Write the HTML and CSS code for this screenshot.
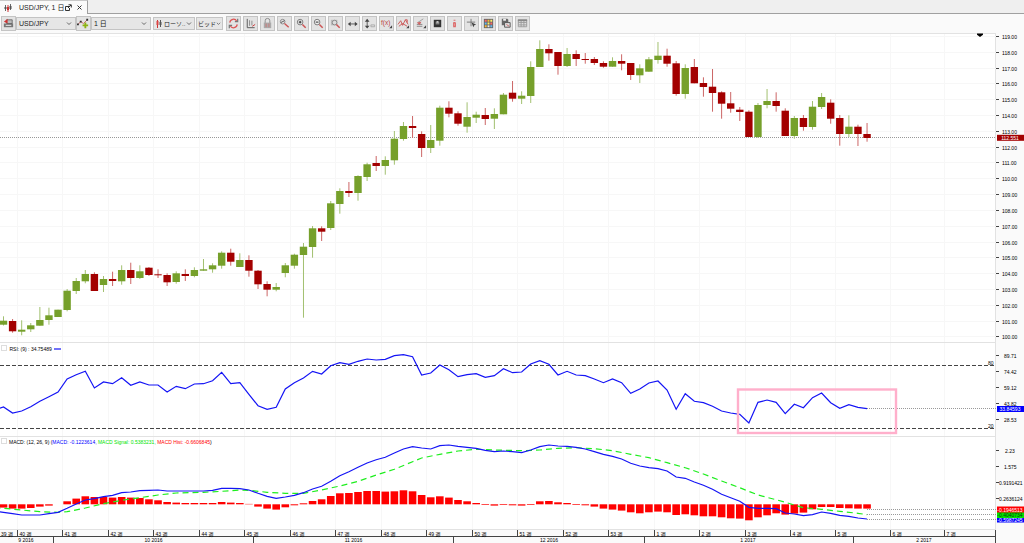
FILE: index.html
```html
<!DOCTYPE html>
<html lang="ja">
<head>
<meta charset="utf-8">
<title>USD/JPY, 1 日</title>
<link rel="stylesheet" href="styles.css">
</head>
<body>
<header class="tabs">
  <div class="tab">
    <svg class="tab-icon" width="8" height="8" viewBox="0 0 8 8"><path d="M1.5 1v6M6.5 0v6" stroke="#666" stroke-width="1"/><path d="M4 1v7" stroke="#c33"/><path d="M0.5 3h2v2h-2zM5.5 2h2v3h-2z" fill="#555"/><path d="M3 3h2v3H3z" fill="#c33"/></svg>
    <span class="tab-title">USD/JPY, 1 日</span>
    <button class="tab-btn" aria-label="切り離す"><svg width="7" height="7" viewBox="0 0 7 7" fill="none" stroke="#333"><path d="M4 2.500H.5v4h4V4"/><path d="M3 4L6 1M3.500.8H6.300V3.500"/></svg></button>
    <button class="tab-btn" aria-label="閉じる"><svg width="7" height="7" viewBox="0 0 7 7" stroke="#333"><path d="M1.500 1.500l4 4M5.500 1.500l-4 4"/></svg></button>
  </div>
</header>
<nav class="toolbar">
  <div class="group">
    <button class="tool" aria-label="銘柄"><svg viewBox="0 0 14 14"><path d="M2 7h10v4H2z" fill="#777"/><path d="M5 3h6v4H5z" fill="#bbb" stroke="#555" stroke-width=".8"/><path d="M6 2L2 5l4 2z" fill="#c33"/><path d="M4 9h6" stroke="#eee"/></svg></button>
    <label class="pick pick-symbol"><select aria-label="通貨ペア"><option>USD/JPY</option></select><svg class="chev" viewBox="0 0 6 4"><path d="M1 .5l2 2 2-2"/></svg></label>
    <button class="tool" aria-label="比較を追加"><svg viewBox="0 0 14 14"><path d="M1 8l3-3 3 2 4-4" fill="none" stroke="#c66"/><path d="M0 7h2v2H0zM3 4h2v2H3zM10 2h2v2h-2z" fill="#333"/><path d="M9 6v6M6 9h6" stroke="#8db312" stroke-width="2"/></svg></button>
    <label class="pick pick-period"><select aria-label="期間"><option>1 日</option></select><svg class="chev" viewBox="0 0 6 4"><path d="M1 .5l2 2 2-2"/></svg></label>
  </div>
  <div class="group pair">
    <label class="pick pick-style"><svg class="lead" viewBox="0 0 6 8"><path d="M1.500 0v8" stroke="#c33"/><path d="M4.500 0v7" stroke="#555"/><path d="M.5 1h2v4h-2z" fill="#d44"/><path d="M3.500 2h2v3h-2z" fill="#555"/></svg><select aria-label="チャート種類"><option>ローソ..</option></select><svg class="chev" viewBox="0 0 6 4"><path d="M1 .5l2 2 2-2"/></svg></label>
    <label class="pick pick-side"><select aria-label="価格"><option>ビッド</option></select><svg class="chev" viewBox="0 0 6 4"><path d="M1 .5l2 2 2-2"/></svg></label>
  </div>
  <div class="tools">
    <button class="tool" aria-label="更新"><svg viewBox="0 0 14 14" fill="none" stroke="#d55" stroke-width="1.300"><path d="M3 6a4 4 0 0 1 7.500-1.500M11 8a4 4 0 0 1-7.500 1.500"/><path d="M11.500 2v3h-3M2.500 12V9h3" stroke="#777"/></svg></button>
    <button class="tool" aria-label="自動シフト"><svg viewBox="0 0 14 14" fill="none" stroke="#555"><path d="M3.500 2v9.500h8"/><path d="M6 3.500v6M8.500 4v5" stroke="#888"/><path d="M12 8l-3 2" stroke="#c33"/></svg></button>
    <button class="tool" aria-label="ロック"><svg viewBox="0 0 14 14" fill="none"><path d="M4.500 7V4a2.500 2.500 0 0 1 5 0v3" stroke="#888"/><path d="M3 6h8v6H3z" fill="#aaa"/><path d="M5.500 7v4M8.500 7v4" stroke="#c77"/></svg></button>
    <button class="tool" aria-label="縮尺"><svg viewBox="0 0 14 14" fill="none"><circle cx="5" cy="5" r="2.500" stroke="#888"/><path d="M3 6l4-2" stroke="#555"/><path d="M7 7l4.500 4" stroke="#c55" stroke-width="1.500"/></svg></button>
    <button class="tool" aria-label="拡大"><svg viewBox="0 0 14 14" fill="none"><circle cx="5.500" cy="5.500" r="3" fill="#eee" stroke="#777"/><path d="M4 5.500h3M5.500 4v3" stroke="#222"/><path d="M8 8l3.500 3.500" stroke="#c55" stroke-width="1.600"/></svg></button>
    <button class="tool" aria-label="縮小"><svg viewBox="0 0 14 14" fill="none"><circle cx="5.500" cy="5.500" r="3" fill="#eee" stroke="#777"/><path d="M4 5.500h3" stroke="#222"/><path d="M8 8l3.500 3.500" stroke="#c55" stroke-width="1.600"/></svg></button>
    <button class="tool" aria-label="範囲拡大"><svg viewBox="0 0 14 14" fill="none"><path d="M2 3h7v6H2z" fill="#bbb"/><circle cx="6" cy="6" r="2.500" fill="#ddd" stroke="#888"/><path d="M8 8l3.500 3.500" stroke="#c55" stroke-width="1.600"/></svg></button>
    <button class="tool" aria-label="横軸"><svg viewBox="0 0 14 14"><path d="M4 7.500h7" stroke="#555"/><path d="M5 5v5L2 7.500zM9.500 5v5l3-2.500z" fill="#444"/></svg></button>
    <button class="tool" aria-label="縦軸"><svg viewBox="0 0 14 14"><path d="M4.500 3v8" stroke="#555"/><path d="M2 5h5L4.500 2zM2 9.500h5l-2.500 3z" fill="#444"/><path d="M8.500 8.500h4v2h-4z" fill="none" stroke="#aaa"/></svg></button>
    <button class="tool" aria-label="インジケーター"><svg viewBox="0 0 14 14"><text x="1" y="9" class="fx">f(x)</text><path d="M10 12h3v-3z" fill="#444"/></svg></button>
    <button class="tool" aria-label="パターン"><svg viewBox="0 0 14 14" fill="none" stroke="#c55"><path d="M1 8l3-4 2 5 3-6 3 5M2 10l4-3 5 3M9 3h2v3"/><path d="M10 12h3v-3z" fill="#444" stroke="none"/></svg></button>
    <button class="tool" aria-label="描画"><svg viewBox="0 0 14 14" fill="none"><path d="M3 8h6M3 10h6" stroke="#888"/><path d="M4 6l6-4" stroke="#999"/><path d="M3 6l3 3 2-4z" fill="#c66"/><path d="M10 12h3v-3z" fill="#444"/></svg></button>
    <button class="tool" aria-label="表示"><svg viewBox="0 0 14 14"><path d="M3 3h8v8H3z" fill="#333"/><path d="M5 5h4v3H5z" fill="#888"/><path d="M6 4.500h2V6H6z" fill="#ddd"/></svg></button>
    <button class="tool" aria-label="情報"><svg viewBox="0 0 14 14" fill="none" stroke="#d66"><path d="M6 3.500h2M6 6.500h1.500v4M5.500 10.500h3"/><path d="M6 6h2v4H6z"/></svg></button>
    <button class="tool" aria-label="カーソル"><svg viewBox="0 0 14 14" fill="none"><path d="M6.500 2v8M2 5.500h9" stroke="#777"/><path d="M7 6l5 2-2 1-1 2z" fill="#444"/></svg></button>
    <button class="tool" aria-label="配色"><svg viewBox="0 0 14 14"><path d="M2 2h10v10H2z" fill="#666"/><path d="M3 3h2v2H3zM9 6h2v2H9z" fill="#f66"/><path d="M6 3h2v2H6zM3 9h2v2H3z" fill="#fb3"/><path d="M9 3h2v2H9zM6 6h2v2H6z" fill="#fe6"/><path d="M3 6h2v2H3zM9 9h2v2H9z" fill="#6be"/><path d="M6 9h2v2H6z" fill="#eee"/></svg></button>
    <button class="tool" aria-label="保存"><svg viewBox="0 0 14 14"><path d="M3 2h6l1 1v6H3z" fill="#666"/><path d="M4.500 2h3v2h-3z" fill="#eee"/><path d="M6 6h6v5H6z" fill="#ddd" stroke="#555"/><path d="M8 8l3 2" stroke="#c66"/></svg></button>
    <button class="tool" aria-label="表"><svg viewBox="0 0 14 14" fill="none" stroke="#999"><path d="M2.500 3.500h9v7h-9zM2.500 6h9M2.500 8.500h9M5.500 4v6.500M8.500 4v6.500"/><path d="M2 3.500h10" stroke="#888" stroke-width="2"/></svg></button>
  </div>
</nav>
<main class="charts">
  <svg class="panel" id="price" viewBox="0 33 1024 309" role="img" aria-label="USD/JPY ローソク足"></svg>
  <svg class="panel" id="rsi" viewBox="0 342 1024 94" role="img" aria-label="RSI"></svg>
  <svg class="panel" id="macd" viewBox="0 436 1024 93" role="img" aria-label="MACD"></svg>
  <svg class="panel" id="time" viewBox="0 529 1024 14" role="img" aria-label="時間軸"></svg>
</main>
<script src="chart.js"></script>
</body>
</html>
```

FILE: styles.css
```css
* {
  box-sizing: border-box;
}

body {
  margin: 0;
  background: #fafafa;
  color: #222;
  font-family: "Liberation Sans", "Noto Sans CJK JP", sans-serif;
  font-size: 7px;
  line-height: 8px;
}

button,
select {
  margin: 0;
  padding: 0;
  border: 0;
  background: none;
  color: inherit;
  font: inherit;
}

.tabs {
  display: flex;
  height: 14px;
  background: #efefef;
}

.tabs::after {
  content: "";
  flex: 1;
  border-bottom: 1px solid #a0a0a0;
}

.tab {
  display: flex;
  align-items: center;
  width: 88px;
  padding-left: 4px;
  background: #fafafa;
  border-top: 1px solid #c8c8c8;
  border-right: 1px solid #a0a0a0;
}

.tab-title {
  flex: 1;
  margin-left: 7px;
  white-space: nowrap;
}

.tab-btn {
  display: flex;
  margin-right: 4px;
}

.toolbar {
  display: flex;
  align-items: center;
  height: 19px;
  padding-left: 1px;
}

.group {
  display: flex;
  align-items: center;
  margin-right: 2px;
}

.pair {
  gap: 1px;
}

.tools {
  display: flex;
  gap: 2px;
  margin-left: 1px;
}

.tool {
  flex: none;
  width: 15px;
  height: 15px;
  background: #e3e3e3;
  border: 1px solid #c4c4c4;
}

.tool svg {
  display: block;
  width: 13px;
  height: 13px;
}

.fx {
  fill: #b44;
  font-size: 7px;
}

.pick {
  display: flex;
  flex: none;
  align-items: center;
  height: 13px;
  padding: 0 3px 0 2px;
  background: #e6e6e6;
  border: 1px solid #c4c4c4;
}

.pick select {
  flex: 1;
  min-width: 0;
  appearance: none;
  outline: none;
}

.pick-symbol {
  width: 60px;
}

.pick-period {
  width: 60px;
}

.pick-style {
  width: 42px;
  padding: 0 2px 0 1px;
  font-size: 6px;
}

.pick-side {
  width: 27px;
  padding: 0 1px;
  font-size: 6px;
}

.chev {
  flex: none;
  width: 6px;
  height: 4px;
  fill: none;
  stroke: #666;
}

.pick-side .chev {
  width: 5px;
}

.lead {
  flex: none;
  width: 6px;
  height: 8px;
  margin: 0 2px 0 1px;
}

.charts {
  display: flex;
  flex-direction: column;
}

.panel {
  display: block;
  width: 100%;
  font-size: 5px;
}

.plot {
  fill: #fff;
}

.axis-bg {
  fill: #fafafa;
}

.grid {
  stroke: #f7f7f7;
}

.edge {
  stroke: #e2e2e2;
}

.tick,
.time-line {
  stroke: #444;
}

.up {
  fill: #76a02b;
}

.up-wick {
  stroke: #a2c070;
}

.down {
  fill: #a30000;
}

.down-wick {
  stroke: #cc6666;
}

.level {
  stroke: #444;
  stroke-dasharray: 4 2;
}

.last {
  stroke: #999;
  stroke-dasharray: 1 1;
}

.line {
  fill: none;
  stroke: #1414f5;
  stroke-width: 1.2;
}

.signal {
  fill: none;
  stroke: #1eee1e;
  stroke-width: 1.2;
  stroke-dasharray: 6 4;
}

.hist {
  fill: #ff0000;
}

.label {
  fill: #000;
}

.blue {
  fill: #0000ff;
}

.green {
  fill: #00e400;
}

.red {
  fill: #ff0000;
}

.tag {
  fill: #fff;
}

.tag-dark {
  fill: #063806;
}

.check {
  fill: #fff;
  stroke: #ddd;
}

.focus {
  fill: none;
  stroke: #ffafcb;
  stroke-width: 2.4;
}
```

FILE: chart.js
```javascript
const NS = 'http://www.w3.org/2000/svg';
const PLOT = 996;
const cx = i => 3.5 + i * 9.09;

function add(parent, tag, cls, attrs, text) {
  const el = document.createElementNS(NS, tag);
  el.setAttribute('class', cls);
  for (const key in attrs) el.setAttribute(key, attrs[key]);
  if (text !== undefined) el.textContent = text;
  parent.appendChild(el);
  return el;
}
const rect = (p, c, x, y, width, height) => add(p, 'rect', c, { x, y, width, height });
const line = (p, c, x1, y1, x2, y2) => add(p, 'line', c, { x1, y1, x2, y2 });
const text = (p, c, x, y, s, anchor = 'start') => add(p, 'text', c, { x, y, 'text-anchor': anchor }, s);

const weeks = [];
for (let k = 0; k <= 18; k++) weeks.push(Math.round(17 + k * 45.47) + 0.5);
weeks.push(890.5, 944.5);

function frame(id, top, height) {
  const svg = document.getElementById(id);
  rect(svg, 'plot', 0, top, PLOT, height);
  rect(svg, 'axis-bg', PLOT, top, 28, height);
  weeks.forEach(x => line(svg, 'grid', x, top, x, top + height));
  line(svg, 'edge', 0, top + 0.5, PLOT, top + 0.5);
  line(svg, 'edge', PLOT - 0.5, top, PLOT - 0.5, top + height);
  return svg;
}
function axisLabel(svg, y, s, x = 1002) {
  line(svg, 'tick', 996, y, 999, y);
  text(svg, 'label', x, y + 2, s);
}
function badge(svg, fill, y, s, cls = 'tag') {
  rect(svg, fill, 997, y - 3, 27, 6);
  text(svg, cls, 1010, y + 2, s, 'middle');
}

// direction, body top, body bottom, high, low
const candles = `g 320.7 324.7 316.3 325.5|r 321 331.3 319 332.7|g 329.7 331.7 320.3 335.3|g 325.3 329.3 323 332|g 320 325.7 307 325.7|g 315.3 320 307.7 324.7|g 309.7 317 309.7 317|g 290.7 310 289 311.3|g 281 291 278 294|g 274 281.3 270 283.3
r 274 291 272.3 291|g 279 285 276 292|r 279 281 271.7 286|g 270 281.3 265.3 284.7|r 270 278 262.7 284|g 271.3 278 265.3 279|r 267.7 275 267 276|r 274.3 275.3 269.3 278|r 275 282.3 273.3 286|g 273.3 282 271.3 283.7
r 274 276 269.3 281|g 270 276 267.3 277.3|g 269.3 270.7 259 270.7|g 265.3 269.3 263.3 272.7|g 252.7 265.7 251.3 268.7|r 252.7 261.7 248.7 265.7|g 260 267 253.3 267|r 260 270.7 255.3 276.7|r 270.7 284.3 270 289|r 284 289.7 281.3 296.3
g 287 289.7 283 291.3|g 265.3 273 263 277.3|g 254.7 265.7 253.7 268.7|g 246.7 255 243 317.7|g 228.3 247 226 257.7|r 228.3 231.7 226.3 241|g 203.3 228 201 230|g 191 204 188.3 213.7|r 191 193 182 197|g 176 193 175.3 200.7
g 164.3 177 162.7 181|r 163 166 156 171|g 160 166 156.3 174.7|g 138.7 160.3 131 164.7|g 126 139 122 140.7|r 126 128 116 138|r 134 148 131.3 157|g 140 148 125 153|g 107.7 140.7 105.7 145.7|r 107.7 113.7 101.3 117.3
r 113.3 123.7 111.3 125.7|g 117 126.7 102.3 132.7|g 114.7 117.7 111.7 123|r 115 119 108 125|g 114 118.7 108.3 129|g 94.7 114.3 93 114.3|r 92.7 98.7 81 101.7|g 95.7 98.7 91.3 104|g 67 96 61.3 103|g 49 67 40.3 67
r 49 53.3 44.3 60.7|r 52 66 52 74.7|g 54 66 48 67|r 54 59 50.3 66|r 59 60 53 63.7|r 59 63 57 65|r 63 66.7 61.3 67.7|g 61 66.7 57.3 66.7|r 61 63.7 54.3 70.3|r 63 75 63 80
g 68.3 75.3 64.3 83|g 59.3 71.7 57 71.7|g 55.7 60 42 63.7|r 55.7 63.7 48.7 66.7|r 63.3 94 61 95.7|g 68 94 64.3 98.7|r 67 83.3 59 83.3|r 83 87 77.3 96.7|r 86.7 93 69 111.7|r 92.3 103.7 91.3 118.7
r 103.3 108.7 92 112.7|r 109.7 112 107 121|r 111.7 137 110.3 137|g 105 137 103 138|g 101 105 89 108.3|r 101 106 92.3 111.7|r 110.7 136 108.3 136|g 118 136 116 138.7|r 118 127 115 130.7|g 106.7 127 101 129.7
g 97 107 93 109|r 102.7 118.7 99.3 123.7|r 118 134 115 145.7|g 126.7 134 115.3 137|r 126.7 134 124.7 146|r 134 138 123 141.7`.split(/[|\n]/);

const price = frame('price', 33, 309);
for (let i = 0; i < 20; i++) {
  const y = Math.round(36 + i * 15.81) + 0.5;
  line(price, 'grid', 0, y, PLOT, y);
  axisLabel(price, y, (119 - i) + '.00');
}
line(price, 'last', 0, 137.5, PLOT, 137.5);
candles.forEach((row, i) => {
  const [dir, ...v] = row.split(' ');
  const [top, bottom, high, low] = v.map(Number);
  const cls = dir === 'g' ? 'up' : 'down';
  line(price, cls + '-wick', cx(i), high, cx(i), low);
  rect(price, cls, cx(i) - 3.7, top, 7.4, bottom - top);
});
add(price, 'path', 'label', { d: 'M977 33.500h6v1.200l-3 2.300-3-2.300z' });
badge(price, 'down', 137.8, '112.551');

const path = (svg, cls, pts) => add(svg, 'polyline', cls, { points: pts.map(p => p.join(',')).join(' ') });

const rsi = frame('rsi', 342, 94);
const rsiValues = [407, 413, 411, 406.7, 401.3, 396.7, 392, 379, 374.7, 371.3, 388, 382, 383.7, 377.7, 385.3, 382, 385, 385, 392, 386.3, 388.7, 384, 383.7, 380.7, 372.3, 383.7, 382.7, 394.3, 405.7, 409.3, 407.3, 389, 382.7, 378, 371.3, 374, 365.7, 362.7, 364.3, 361.3, 359, 360, 359.3, 355.7, 354.7, 356.7, 375, 373, 365, 369.7, 376.7, 374.7, 373.7, 377.3, 375.7, 368.7, 372.7, 372, 364, 360.7, 364.3, 375, 371.3, 375, 375.7, 379, 382.7, 379, 382.7, 393.3, 389, 383, 381, 390, 409.3, 393.7, 401.3, 402.7, 406.3, 411, 413, 414.3, 423, 402.3, 400, 402.3, 413.7, 404.3, 407.7, 397.7, 393, 402.7, 408.3, 404.7, 407.3, 408.7];
line(rsi, 'level', 0, 365.5, PLOT, 365.5);
line(rsi, 'level', 0, 428.5, PLOT, 428.5);
line(rsi, 'last', 867, 408.5, PLOT, 408.5);
path(rsi, 'line', [[-1, 408.5], ...rsiValues.map((y, i) => [cx(i), y])]);
rect(rsi, 'check', 1.5, 345.5, 5, 5);
text(rsi, 'label', 9.5, 351, 'RSI: (9) : 34.75489');
line(rsi, 'line', 54, 349, 61, 349);
text(rsi, 'label', 988, 364.5, '80');
text(rsi, 'label', 988, 427.5, '20');
[[355.5, '89.71'], [371.5, '74.42'], [387.5, '59.12'], [403.5, '43.82'], [419.5, '28.53']].forEach(([y, s]) => axisLabel(rsi, y, s, 1004));
badge(rsi, 'blue', 409, '33.84593');
rect(rsi, 'focus', 738, 389.500, 158, 43.500);

const macd = frame('macd', 436, 93);
const hist = [-3.3, -4.3, -4.3, -3.7, -2.3, -1.3, 0, 3, 5.7, 8, 7.3, 7.3, 6.7, 7.3, 6.7, 6.3, 5, 4, 2.3, 1.7, 1.3, 1.3, 1.3, 1.3, 2.3, 1.7, 1.3, 0.4, -2.3, -4.3, -5.3, -3, -1, 1, 3.3, 5, 8.3, 11, 11.3, 12.3, 13.3, 13.3, 12.7, 13, 14, 13, 9.3, 7, 8, 6.7, 4.3, 3, 1.3, -0.7, -1.3, -0.7, -1, -1.3, -0.7, 3, 3.3, 2, 1.3, -0.7, -1, -2.3, -4.3, -5.3, -6.3, -8, -9, -8, -7.3, -8, -10.7, -10, -11, -12, -12, -13, -14, -14.3, -16, -13, -11, -9, -10.3, -9.3, -8.3, -5, -2.7, -2.7, -3.7, -4, -4.3, -4.3];
const macdValues = [512.3, 513.7, 515, 515, 515, 513.7, 512.3, 508.3, 504, 500, 498.7, 496.7, 495.3, 492.7, 492, 490.7, 490.3, 490, 491, 491, 491, 491, 491, 490.3, 488.3, 488.3, 488.7, 490, 493.3, 496.3, 498.3, 497, 495.3, 492.7, 489, 486.3, 481.3, 475.7, 471.7, 467.3, 463, 459.7, 457.3, 453, 449, 446.7, 448, 449, 445.7, 445, 446.3, 447.3, 448.3, 450.3, 451.7, 451, 451.7, 452.7, 450, 446.7, 445, 446, 446.3, 447.3, 449, 451.7, 454.3, 456.3, 459, 463.3, 466, 467.7, 468.7, 471, 477, 478.3, 482, 485.3, 489.3, 494.3, 497.7, 501.3, 507.3, 508.3, 508.3, 508.7, 513, 514, 515.7, 514.7, 512, 513.3, 515.3, 516.3, 518, 519];
const signal = [[-1, 507.7], [0, 508.3], [2, 510], [4, 511.7], [6, 512.3], [7, 511.7], [9, 508], [11, 503.7], [13, 500.3], [15, 497.7], [17, 495], [19, 493], [22, 492.3], [24, 491.3], [26, 490], [27, 490.3], [29, 492.3], [31, 493.3], [33, 493.3], [35, 490], [37, 486], [39, 481.3], [41, 475], [43, 469.3], [45, 461.7], [46, 458], [48, 454.3], [50, 451], [52, 449.3], [54, 450], [57, 450.7], [59, 450], [61, 448.3], [63, 447.7], [65, 448.7], [67, 450.7], [69, 454.3], [71, 457.7], [73, 462.7], [75, 467.7], [77, 474], [79, 481], [81, 487.7], [83, 495], [85, 499.7], [86, 502.3], [88, 507.7], [90, 509.3], [92, 511.3], [94, 513.3], [95, 514.7]];
hist.forEach((h, i) => rect(macd, 'hist', cx(i) - 3.8, h > 0 ? 504.3 - h : 504.3, 7.6, Math.abs(h)));
[509.5, 514.5, 519.5].forEach(y => line(macd, 'last', 867, y, PLOT, y));
path(macd, 'signal', signal.map(([i, y]) => [cx(i), y]));
path(macd, 'line', [[-1, 511.7], ...macdValues.map((y, i) => [cx(i), y])]);
rect(macd, 'check', 1.5, 438.5, 5, 5);
const legend = text(macd, 'label', 9, 444, 'MACD: (12, 26, 9) (');
add(legend, 'tspan', 'blue', {}, 'MACD: -0.1223614, ');
add(legend, 'tspan', 'green', {}, 'MACD Signal: 0.5383231, ');
add(legend, 'tspan', 'red', {}, 'MACD Hist: -0.6606845');
add(legend, 'tspan', 'label', {}, ')');
axisLabel(macd, 450.5, '2.23', 1005);
axisLabel(macd, 466.5, '1.575', 1004);
axisLabel(macd, 482.5, '0.9191421', 999);
axisLabel(macd, 498.5, '0.2636124', 999);
badge(macd, 'blue', 519.5, '-0.5987245');
badge(macd, 'green', 515, '-0.4040734', 'tag-dark');
badge(macd, 'red', 509.5, '-0.1946513');

const time = document.getElementById('time');
rect(time, 'axis-bg', 0, 529, 1024, 14);
line(time, 'edge', 0, 529.5, PLOT, 529.5);
line(time, 'time-line', 0, 536.5, PLOT, 536.5);
line(time, 'time-line', PLOT - 0.5, 530, PLOT - 0.5, 543);
text(time, 'label', 1, 535.5, '39 週');
weeks.forEach((x, k) => {
  line(time, 'time-line', x, 530, x, 536);
  text(time, 'label', x + 2, 535.5, (k < 14 ? 40 + k : k - 13) + ' 週');
});
[53.5, 253.5, 453.5, 644.5, 853.5].forEach(x => line(time, 'time-line', x, 537, x, 543));
[[26, '9 2016'], [153.5, '10 2016'], [353.5, '11 2016'], [549, '12 2016'], [748, '1 2017'], [924, '2 2017']].forEach(([x, s]) => text(time, 'label', x, 542, s, 'middle'));
```
